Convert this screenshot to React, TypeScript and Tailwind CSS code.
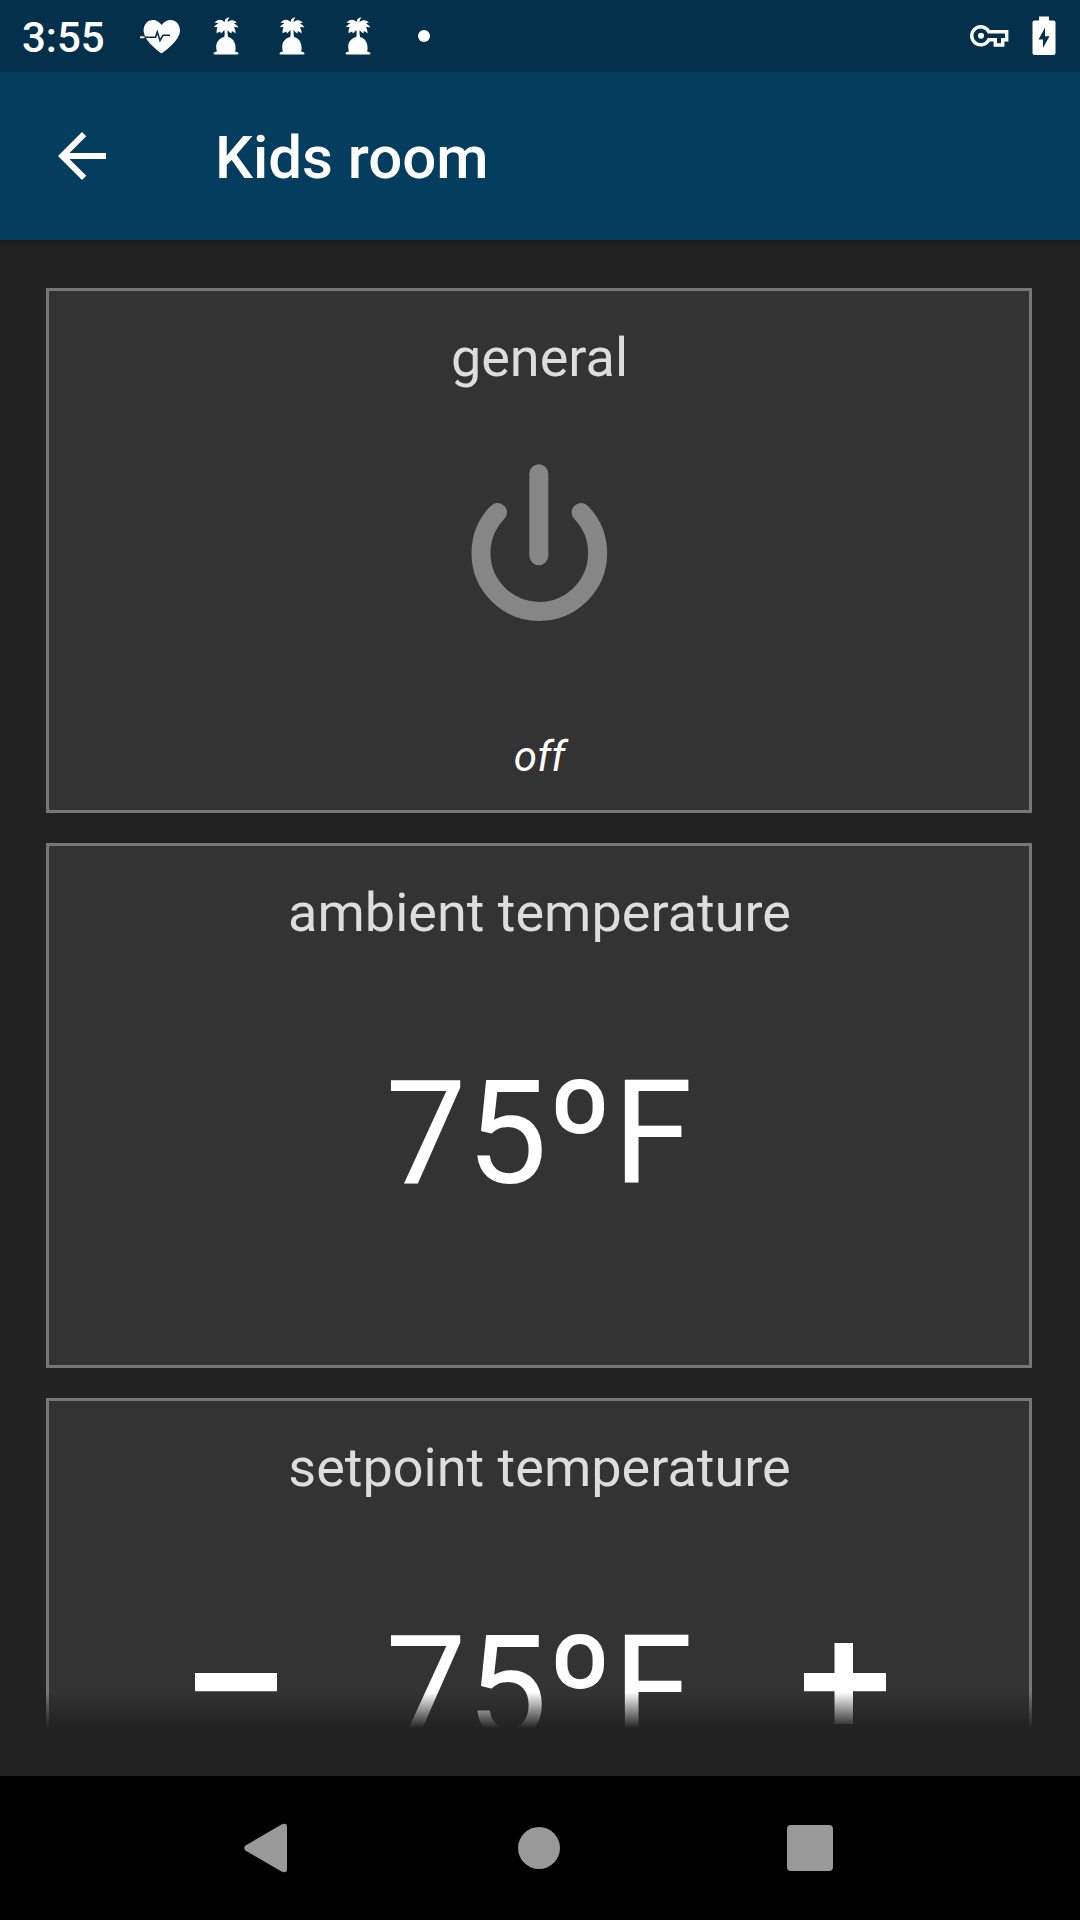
import React from "react";

function HeartPulse() {
  return (
    <svg className="mt-px h-[36px] w-[42px]" viewBox="140 18 42 36" fill="none">
      <path
        d="M161.5 52.5C155 47.5 144 39 143.6 30C143.5 23.5 147.500 19 153 19C156.500 19 159.500 21 161.700 24C163.500 21 167 19 170.500 19C176 19 180 23.500 180 30C179.500 39 168 47.500 161.500 52.500Z"
        fill="#fff"
      />
      <path d="M143 36.300H155.500L157.300 31L160 39.500L163 34.300H170" stroke="#04304b" strokeWidth="1.600" />
      <path d="M140 36.300H144.500" stroke="#fff" strokeWidth="1.800" />
    </svg>
  );
}

function Palm() {
  return (
    <svg className="h-[38px] w-[26px]" viewBox="0 0 26 38" fill="#fff">
      <path d="M16.500 .2C13.500 .5 11.500 2.500 11.800 5.200C9 1.800 4.500 1.500 1.500 6C3 5.500 4.300 5.600 5.500 6.200C3.800 7.200 1.800 8.800 .5 10.200C2 9.800 3.300 9.900 4.600 10.400C3.500 12.300 3.300 14.500 3.800 16.300C5 15.300 6 14.700 7.300 14.400L7.800 16.400C9.300 15.300 10.500 14.300 11.300 13C11.900 15.500 11.700 18 11.200 20.100C6.500 21 3.200 25 3.200 30C3.200 31.800 3.500 33 4 34.500C2 34.900 .5 35.700 .5 36.600C.5 37.200 1 37.500 1.500 37.500H24.500C25 37.500 25.500 37.200 25.500 36.600C25.500 35.700 24 34.900 22 34.500C22.600 33 22.700 31.500 22.500 29.700C22 24.800 19.500 21 15 20.100C14.600 18 14.400 15.500 14.600 13C15.600 14.600 16.900 15.600 18.500 16.400L18.700 14.300C20.300 14.700 21.500 15.400 22.400 16.500C22.800 14.500 22.300 12.300 21 10.400C22.500 9.800 24 10 25.400 10.500C24.500 8.600 23 7.200 21 6.400C22 5.800 23 5.700 24 6C21.500 2.500 17.500 2.500 14.600 5.200C14.500 3 15.300 1.800 16.500 .2Z" />
    </svg>
  );
}

function KeyIcon() {
  return (
    <svg className="mt-[2px] h-[24px] w-[40px]" viewBox="0 0 40 24" fill="none">
      <path
        d="M18.800 6.800H36.700V14.800H32.700V20H25.300V14.800H18.800A9 9 0 1 1 18.800 6.800Z"
        stroke="#fff"
        strokeWidth="3.400"
      />
      <circle cx="11" cy="10.700" r="3" fill="#fff" />
    </svg>
  );
}

function Battery() {
  return (
    <svg className="h-[40px] w-[24px]" viewBox="0 0 24 40">
      <path
        fillRule="evenodd"
        fill="#fff"
        d="M7 .5H17V4.500H21.500A2 2 0 0 1 23.500 6.500V37A2 2 0 0 1 21.500 39H2.500A2 2 0 0 1 .5 37V6.500A2 2 0 0 1 2.500 4.500H7ZM13 11.500L6.500 23.500H11V32L17.500 20.300H13Z"
      />
    </svg>
  );
}

function Card({ title, children }: { title: string; children: React.ReactNode }) {
  return (
    <section className="flex h-[525px] shrink-0 flex-col items-center border-[3px] border-[#777] bg-[#333] pt-[35px]">
      <h2 className="pl-px text-[54px] leading-[64px] text-[#ddd]">{title}</h2>
      {children}
    </section>
  );
}

export default function App() {
  return (
    <div className="flex h-[1920px] w-[1080px] flex-col overflow-hidden bg-[#222] font-['Roboto',sans-serif] text-white">
      <div className="flex h-[72px] shrink-0 items-center justify-between bg-[#04304b] pr-[24px] pl-[22px]">
        <div className="flex items-center">
          <span className="w-[118px] pt-[4px] text-[42px] leading-[50px] font-medium">3:55</span>
          <HeartPulse />
          <div className="ml-[31px] flex gap-[40px]">
            <Palm />
            <Palm />
            <Palm />
          </div>
          <span className="ml-[47px] h-3 w-3 rounded-full bg-white" />
        </div>
        <div className="flex items-center gap-[22px]">
          <KeyIcon />
          <Battery />
        </div>
      </div>

      <header className="z-10 flex h-[168px] shrink-0 items-center bg-[#053d5e] pl-[46px]">
        <svg className="h-[72px] w-[72px]" viewBox="0 0 24 24" fill="#fff">
          <path d="M20 11H7.830l5.590-5.590L12 4l-8 8 8 8 1.410-1.410L7.830 13H20v-2z" />
        </svg>
        <h1 className="ml-[97px] pt-[4px] text-[60px] leading-[72px] font-medium">Kids room</h1>
      </header>

      <main className="relative h-[1536px] shrink-0 overflow-hidden pr-[48px] pl-[46px]">
        <div className="flex flex-col gap-[30px] pt-[48px]">
          <Card title="general">
            <svg className="mt-[71px] h-[164px] w-[140px]" viewBox="469.500 461.500 140 164" fill="none" stroke="#868686" strokeWidth="19" strokeLinecap="round">
              <path d="M539.300 474.300V556.200M498 513A58.300 58.300 0 1 0 581.600 513" />
            </svg>
            <span className="mt-[107px] pl-px text-[42px] leading-[50px] italic">off</span>
          </Card>
          <Card title="ambient temperature">
            <span className="mt-[105px] text-[144px] leading-[168px]">75ºF</span>
          </Card>
          <Card title="setpoint temperature">
            <div className="mt-[105px] flex items-start pl-[2px]">
              <svg className="mt-[38px] h-[82px] w-[82px]" viewBox="0 0 82 82">
                <path d="M0 30H82V48.300H0Z" fill="#fff" />
              </svg>
              <span className="w-[527px] pr-[2px] text-center text-[144px] leading-[168px]">75ºF</span>
              <svg className="mt-[38px] h-[82px] w-[82px]" viewBox="0 0 82 82">
                <path d="M30.500 0H49V30H82V48.300H49V81H30.500V48.300H0V30H30.500Z" fill="#fff" />
              </svg>
            </div>
          </Card>
        </div>
        <div className="absolute inset-x-0 top-0 h-2 bg-linear-to-b from-black/20 to-transparent" />
        <div className="absolute inset-x-0 bottom-0 flex flex-col">
          <div className="h-[36px] bg-linear-to-b from-[#222]/0 to-[#222]" />
          <div className="h-[48px] bg-[#222]" />
        </div>
      </main>

      <nav className="flex h-[144px] shrink-0 items-center justify-between bg-black pr-[247px] pl-[244px]">
        <svg className="h-[50px] w-[44px]" viewBox="0 0 44 50" fill="#999">
          <path d="M1.500 22.500L37.500 1.500Q43 -1 43 4V46Q43 51 37.500 48.500L1.500 27.500Q-1 25 1.500 22.500Z" />
        </svg>
        <span className="ml-[3px] h-[42px] w-[42px] rounded-full bg-[#999]" />
        <span className="h-[46px] w-[46px] rounded-[4px] bg-[#999]" />
      </nav>
    </div>
  );
}
